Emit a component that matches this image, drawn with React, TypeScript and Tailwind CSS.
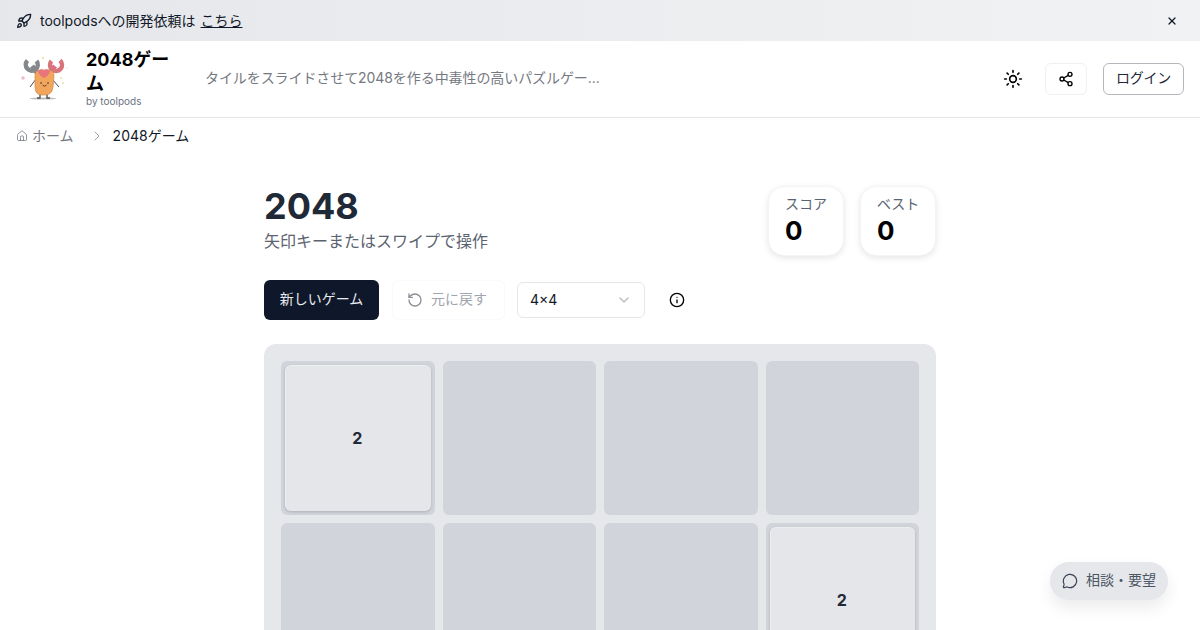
import { Rocket, X, Sun, Share2, House, ChevronRight, RotateCcw, ChevronDown, Info, MessageCircle } from "lucide-react";

const font = "font-['Inter','Noto_Sans_CJK_JP',sans-serif]";

function Cell({ value }: { value?: number }) {
  return (
    <div className="h-[154px] rounded-md bg-[#d1d5db] p-1">
      {value ? (
        <div className="flex h-full w-full items-center justify-center rounded-md border-t border-l border-[#eceef0] bg-[#e4e6ea] pb-0.5 pr-0.5 text-base font-bold text-[#1f2937] shadow-[0_1px_3px_rgba(0,0,0,0.18)]">
          {value}
        </div>
      ) : null}
    </div>
  );
}

export default function App() {
  const cells = [2, 0, 0, 0, 0, 0, 0, 2];
  return (
    <div className={`${font} relative h-[630px] w-[1200px] overflow-hidden bg-white text-[#0f172a]`}>
      <div className="flex h-[41px] items-center justify-between bg-gradient-to-r from-[#e5e7eb] to-[#f1f2f3] pl-4 pr-[22px] text-sm text-[#111827]">
        <div className="flex items-center gap-2">
          <Rocket className="h-4 w-4" strokeWidth={2} />
          <span>
            toolpodsへの開発依頼は <span className="ml-px underline">こちら</span>
          </span>
        </div>
        <X className="h-3 w-3" strokeWidth={2.5} />
      </div>

      <header className="flex h-[77px] items-center border-b border-[#e5e7eb] pl-[16px] pr-4">
        <svg viewBox="0 0 56 56" className="h-[56px] w-[56px] shrink-0">
          <ellipse cx="27" cy="47.5" rx="13" ry="1" fill="#b9bcbc" />
          <circle cx="7" cy="27" r="1.8" fill="#efbcc6" />
          <circle cx="47" cy="32" r="1" fill="#e9e3a0" />
          <circle cx="27" cy="7" r="0.9" fill="#e9d27a" />
          <circle cx="51" cy="17" r="0.7" fill="#d9e5c0" />
          <circle cx="45" cy="27" r="1" fill="#e9e3a0" />
          <path d="M20 28 L14 36 M36 28 L43 36" stroke="#4a4a4f" strokeWidth="1" fill="none" />
          <path d="M24 42v5h-3M31 42v5h3" stroke="#55514e" strokeWidth="1.4" fill="none" />
          <path d="M16 15 L22 23" stroke="#85888b" strokeWidth="5" />
          <path d="M11.5 9.5 A6 6 0 1 0 20.5 10" stroke="#85888b" strokeWidth="4.5" fill="none" />
          <path d="M39 15 L33 23" stroke="#d9747c" strokeWidth="5" />
          <path d="M35.5 10 A6 6 0 1 0 44 9.5" stroke="#d9747c" strokeWidth="4.5" fill="none" />
          <path d="M19 25 Q19 19 25 19 L32 19 Q38 19 38 25 L37 36 Q36 44 29 44 L26 44 Q19 44 19 36 Z" fill="#f2a55c" stroke="#d08a45" strokeWidth="0.7" />
          <path d="M22 20 Q25 17 28 19.5 Q31 17 34 20 Q33 25 28 27 Q23 25 22 20 Z" fill="#e8757c" />
          <circle cx="25" cy="32" r="0.8" fill="#3a2c20" />
          <circle cx="32" cy="32" r="0.8" fill="#3a2c20" />
          <path d="M26.5 34 Q28.5 36.5 30.5 34" stroke="#3a2c20" strokeWidth="0.8" fill="none" />
        </svg>
        <div className="ml-[14px] w-[96px] shrink-0 pb-[3px]">
          <div className="text-lg leading-[24px] font-bold text-black">2048ゲーム</div>
          <div className="-mt-px text-[10px] leading-[12px] text-[#6b7280]">by toolpods</div>
        </div>
        <div className="ml-[23px] flex-1 pb-0.5 text-sm tracking-[-0.08px] text-[#75797f]">タイルをスライドさせて2048を作る中毒性の高いパズルゲー...</div>
        <div className="flex items-center">
          <Sun className="mr-[22px] h-5 w-5 text-black" strokeWidth={2} />
          <div className="mr-4 flex h-8 w-[42px] items-center justify-center rounded-md border border-[#eef0f2] bg-white">
            <Share2 className="h-4 w-4 text-black" strokeWidth={2} />
          </div>
          <div className="flex h-8 w-[81px] items-center justify-center rounded-md border border-[#b4b8bd] bg-white pb-0.5 text-sm tracking-[-0.3px] text-[#1f2937]">ログイン</div>
        </div>
      </header>

      <nav className="flex h-[35px] items-center pl-4 text-sm">
        <House className="h-3 w-3 text-[#6b7280]" strokeWidth={1.5} />
        <span className="ml-1 text-[#75797f]">ホーム</span>
        <ChevronRight className="ml-[15px] h-4 w-4 text-[#9ca3af]" strokeWidth={1.5} />
        <span className="ml-[8px] text-[#111827]">2048ゲーム</span>
      </nav>

      <main className="mx-auto w-[672px] pt-[33px]">
        <div className="flex h-[70px] items-start justify-between">
          <div>
            <h1 className="mb-[3px] text-4xl leading-[40px] font-bold text-[#1f2937]">2048</h1>
            <p className="text-base leading-[24px] text-[#5b6370]">矢印キーまたはスワイプで操作</p>
          </div>
          <div className="flex gap-4">
            <div className="h-[70px] w-[76px] rounded-2xl border border-[#f3f4f6] bg-white pl-4 pt-[7px] shadow-[0_2px_6px_rgba(0,0,0,0.1)]">
              <div className="text-sm leading-[20px] text-[#5b6370]">スコア</div>
              <div className="text-[26px] leading-[33px] font-bold text-black">0</div>
            </div>
            <div className="h-[70px] w-[76px] rounded-2xl border border-[#f3f4f6] bg-white pl-4 pt-[7px] shadow-[0_2px_6px_rgba(0,0,0,0.1)]">
              <div className="text-sm leading-[20px] text-[#5b6370]">ベスト</div>
              <div className="text-[26px] leading-[33px] font-bold text-black">0</div>
            </div>
          </div>
        </div>

        <div className="mt-[24px] flex h-10 items-center">
          <div className="flex h-10 w-[115px] items-center justify-center rounded-md bg-[#0f172a] pb-0.5 text-sm text-[#e8ebef]">新しいゲーム</div>
          <div className="ml-[13px] flex h-10 w-[113px] items-center justify-center gap-2 rounded-md border border-[#fafafa] pb-0.5 pr-[3px] text-sm text-[#a0a5ac]">
            <RotateCcw className="mt-0.5 h-4 w-4 text-[#8b8f96]" strokeWidth={2} />
            元に戻す
          </div>
          <div className="ml-[12px] flex h-9 w-[128px] items-center justify-between rounded-md border border-[#e5e7eb] bg-white pl-3 pr-3 text-sm text-[#111827]">
            4×4
            <ChevronDown className="h-4 w-4 text-[#b8bcc2]" strokeWidth={2} />
          </div>
          <Info className="ml-[24px] h-4 w-4 text-black" strokeWidth={2} />
        </div>

        <div className="mt-[24px] rounded-xl bg-[#e5e7eb] p-[17px]">
          <div className="grid grid-cols-4 gap-2">
            {cells.map((v, i) => (
              <Cell key={i} value={v} />
            ))}
          </div>
        </div>
      </main>

      <div className="absolute bottom-[30px] right-[32px] flex h-[38px] w-[118px] items-center justify-center gap-2 rounded-full bg-[#e5e7eb] text-sm text-[#4b5563] shadow-[0_8px_16px_rgba(0,0,0,0.08)]">
        <MessageCircle className="h-4 w-4 text-[#374151]" strokeWidth={1.75} />
        <span className="pb-0.5">相談・要望</span>
      </div>
    </div>
  );
}
